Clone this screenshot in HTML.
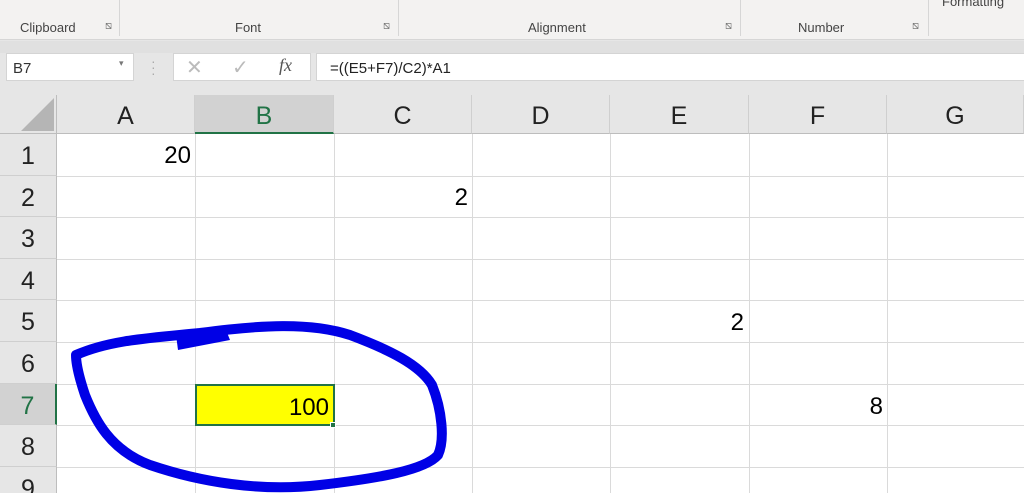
<!DOCTYPE html>
<html><head><meta charset="utf-8"><style>
*{margin:0;padding:0;box-sizing:border-box}
html,body{width:1024px;height:493px;overflow:hidden}
body{background:#e6e6e6;font-family:"Liberation Sans",sans-serif;position:relative}
.a{position:absolute}
.rib{left:0;top:0;width:1024px;height:40px;background:#f3f2f1;border-bottom:1px solid #d6d6d6}
.gl{top:20px;font-size:13px;color:#444}
.sep{top:0;width:1px;height:36px;background:#d6d6d6}
.ln{font-size:11px;color:#666;top:20px}
.box{background:#fff;border:1px solid #d4d4d4}
.ch{top:95px;height:39px;background:#e6e6e6;border-right:1px solid #cfcfcf;border-bottom:1px solid #bdbdbd;font-size:25px;text-align:center;line-height:42px;color:#222}
.rh{left:0;width:57px;background:#e6e6e6;border-bottom:1px solid #cfcfcf;border-right:1px solid #bdbdbd;font-size:25px;text-align:center;color:#222}
.v{font-size:24px;color:#000;text-align:right}
</style></head><body>
<div class="a rib"></div>
<div class="a gl" style="left:20px">Clipboard</div>
<div class="a ln" style="left:105px">⧅</div>
<div class="a sep" style="left:119px"></div>
<div class="a gl" style="left:235px">Font</div>
<div class="a ln" style="left:383px">⧅</div>
<div class="a sep" style="left:398px"></div>
<div class="a gl" style="left:528px">Alignment</div>
<div class="a ln" style="left:725px">⧅</div>
<div class="a sep" style="left:740px"></div>
<div class="a gl" style="left:798px">Number</div>
<div class="a ln" style="left:912px">⧅</div>
<div class="a sep" style="left:928px"></div>
<div class="a gl" style="left:942px;top:-6px">Formatting</div>
<div class="a" style="left:0;top:41px;width:1024px;height:12px;background:#e0e0e0"></div>
<div class="a box" style="left:6px;top:53px;width:128px;height:28px;font-size:15px;padding:6px 0 0 6px;color:#333">B7<span class="a" style="left:112px;top:4px;font-size:9px;color:#777">▾</span></div>
<div class="a" style="left:151px;top:58px;font-size:14px;color:#aaa;line-height:6px">·<br>·<br>·</div>
<div class="a box" style="left:173px;top:53px;width:138px;height:28px"></div>
<div class="a" style="left:186px;top:55px;font-size:20px;color:#bbb">✕</div>
<div class="a" style="left:232px;top:55px;font-size:20px;color:#bbb">✓</div>
<div class="a" style="left:279px;top:55px;font-size:18px;color:#555;font-family:'Liberation Serif',serif;font-style:italic">fx</div>
<div class="a box" style="left:316px;top:53px;width:710px;height:28px;font-size:15px;padding:6px 0 0 13px;color:#222">=((E5+F7)/C2)*A1</div>
<div class="a" style="left:0;top:95px;width:1024px;height:398px;background:#fff"></div>
<div class="a" style="left:0;top:95px;width:57px;height:39px;background:#e6e6e6;border-right:1px solid #bdbdbd;border-bottom:1px solid #bdbdbd"></div>
<svg class="a" style="left:20px;top:98px" width="36" height="34"><polygon points="34,0 34,33 1,33" fill="#b5b5b5"/></svg>
<div class="a ch" style="left:57px;width:138px">A</div>
<div class="a ch" style="left:195px;width:139px;background:#d2d2d2;color:#217346;border-bottom:2px solid #217346">B</div>
<div class="a ch" style="left:334px;width:138px">C</div>
<div class="a ch" style="left:472px;width:138px">D</div>
<div class="a ch" style="left:610px;width:139px">E</div>
<div class="a ch" style="left:749px;width:138px">F</div>
<div class="a ch" style="left:887px;width:137px">G</div>
<svg class="a" style="left:0;top:0" width="1024" height="493">
<g stroke="#dadada" stroke-width="1">
<line x1="57" y1="176.5" x2="1024" y2="176.5"/><line x1="57" y1="217.5" x2="1024" y2="217.5"/>
<line x1="57" y1="259.5" x2="1024" y2="259.5"/><line x1="57" y1="300.5" x2="1024" y2="300.5"/>
<line x1="57" y1="342.5" x2="1024" y2="342.5"/><line x1="57" y1="384.5" x2="1024" y2="384.5"/>
<line x1="57" y1="425.5" x2="1024" y2="425.5"/><line x1="57" y1="467.5" x2="1024" y2="467.5"/>
<line x1="195.5" y1="134" x2="195.5" y2="493"/><line x1="334.5" y1="134" x2="334.5" y2="493"/>
<line x1="472.5" y1="134" x2="472.5" y2="493"/><line x1="610.5" y1="134" x2="610.5" y2="493"/>
<line x1="749.5" y1="134" x2="749.5" y2="493"/><line x1="887.5" y1="134" x2="887.5" y2="493"/>
</g></svg>
<div class="a rh" style="top:134px;height:42px;line-height:44px">1</div>
<div class="a rh" style="top:176px;height:41px;line-height:44px">2</div>
<div class="a rh" style="top:217px;height:42px;line-height:44px">3</div>
<div class="a rh" style="top:259px;height:41px;line-height:44px">4</div>
<div class="a rh" style="top:300px;height:42px;line-height:44px">5</div>
<div class="a rh" style="top:342px;height:42px;line-height:44px">6</div>
<div class="a rh" style="top:384px;height:41px;line-height:44px;background:#d2d2d2;color:#217346;border-right:2px solid #217346">7</div>
<div class="a rh" style="top:425px;height:42px;line-height:44px">8</div>
<div class="a rh" style="top:467px;height:30px;line-height:44px">9</div>
<div class="a v" style="left:57px;top:142px;width:134px">20</div>
<div class="a v" style="left:334px;top:184px;width:134px">2</div>
<div class="a v" style="left:610px;top:309px;width:134px">2</div>
<div class="a v" style="left:749px;top:393px;width:134px">8</div>
<div class="a v" style="left:195px;top:384px;width:140px;height:42px;background:#ff0;border:2px solid #217346;padding:8px 4px 0 0">100</div>
<div class="a" style="left:330px;top:422px;width:6px;height:6px;background:#217346;border:1px solid #fff"></div>
<svg class="a" style="left:0;top:0" width="1024" height="493">
<path d="M76,355 C110,340 150,338 200,333 C260,325 310,322 350,335 C390,350 420,365 432,385 C442,410 445,440 438,455 C425,470 380,478 320,485 C260,492 200,482 150,465 C110,450 95,420 85,395 C80,380 76,365 76,355 Z" fill="none" stroke="#0000e6" stroke-width="10" stroke-linejoin="round"/>
<path d="M176,335 L178,350 L230,340 L226,330 Z" fill="#0000e6"/>
</svg>
</body></html>
